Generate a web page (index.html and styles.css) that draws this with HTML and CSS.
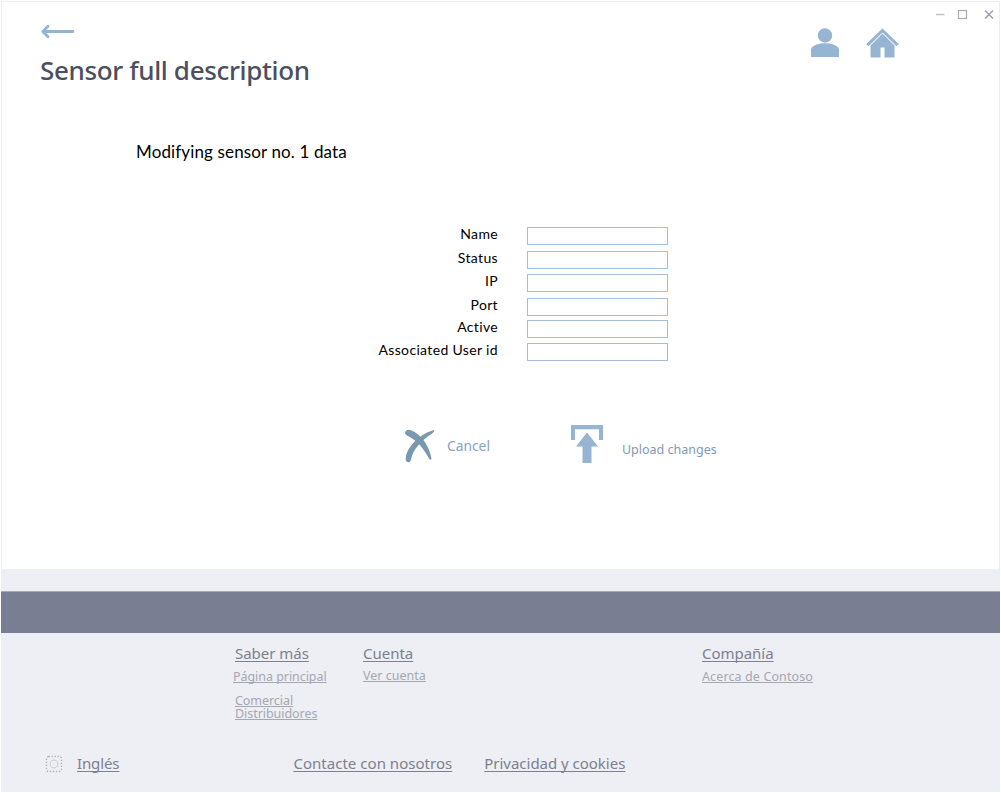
FILE: index.html
```html
<!DOCTYPE html>
<html lang="en">
<head>
<meta charset="utf-8">
<title>Sensor full description</title>
<link rel="stylesheet" href="styles.css">
</head>
<body>
<div class="window">
  <main class="content">
    <div class="titlebar">
      <svg class="window-controls" width="56" height="12" viewBox="0 0 56 12" fill="none">
        <path d="M0 6.500h8.500" stroke="#c3c3ca" stroke-width="1.500"/>
        <rect x="22.500" y="2.500" width="8" height="8" stroke="#aaaab8" stroke-width="1.200"/>
        <path d="M49 2.500l8 8M57 2.500l-8 8" stroke="#9d9ead" stroke-width="1.500"/>
      </svg>
    </div>
    <header class="header">
      <div class="heading">
        <svg class="back" width="34" height="14" viewBox="0 0 34 14" fill="none" stroke="#93b5d3" stroke-width="2.800" stroke-linecap="round" stroke-linejoin="round">
          <path d="M2 7.500H32M7 2.300L1.800 7.500L7 12.700"/>
        </svg>
        <h1 class="title">Sensor full description</h1>
      </div>
      <nav class="nav">
        <svg width="28" height="30" viewBox="0 0 28 30" fill="#95b5d2">
          <circle cx="14" cy="7.500" r="7.200"/>
          <path d="M0 29V21C2 17 8 15.300 14 15.300S26 17 28 21V29Z"/>
        </svg>
        <svg width="34" height="30" viewBox="0 0 34 30" fill="#95b5d2">
          <path d="M16.500 .500L32.800 16L30.500 18.200L16.500 4.500L2.500 18.200L.200 16Z"/>
          <path d="M16.500 5.500L28.500 17.400V29.500H18.500V19.500H14.500V29.500H4.500V17.400Z"/>
        </svg>
      </nav>
    </header>
    <p class="subtitle">Modifying sensor no. 1 data</p>
    <form class="form">
      <label class="label" for="name">Name</label><input class="field" id="name">
      <label class="label" for="status">Status</label><input class="field" id="status">
      <label class="label" for="ip">IP</label><input class="field" id="ip">
      <label class="label" for="port">Port</label><input class="field" id="port">
      <label class="label" for="active">Active</label><input class="field" id="active">
      <label class="label" for="user">Associated User id</label><input class="field" id="user">
    </form>
    <div class="actions">
      <a class="action cancel">
        <svg width="30" height="34" viewBox="0 0 30 34" fill="#7a97b0">
          <path d="M0 4.500C0 1 3 -.200 6 1.200C17 6 25 18 26.500 30Q25.500 31.500 24.200 30C19 20 12 11 1.500 6.300Z"/>
          <path d="M29 1C29.500 2.500 29 3.200 27 4.500C16 12 8 20 6 30.500C5.500 33.500 3.500 34 1 32C-1 22 12 5.500 29 1Z"/>
        </svg>
        <span>Cancel</span>
      </a>
      <a class="action upload">
        <svg width="32" height="38" viewBox="0 0 32 38" fill="#95b5d2">
          <path d="M0 0H32V15H28V4.300H4V15H0Z"/>
          <path d="M16 7.500L27 21.500H20.500V38H11.500V21.500H5Z"/>
        </svg>
        <span>Upload changes</span>
      </a>
    </div>
  </main>
  <footer class="footer">
    <div class="band"></div>
    <div class="links">
      <div class="column">
        <a class="link">Saber más</a>
        <a class="sublink home">Página principal</a>
        <a class="sublink tight">Comercial</a>
        <a class="sublink tight">Distribuidores</a>
      </div>
      <div class="column">
        <a class="link">Cuenta</a>
        <a class="sublink account">Ver cuenta</a>
      </div>
      <div class="column">
        <a class="link">Compañía</a>
        <a class="sublink about">Acerca de Contoso</a>
      </div>
    </div>
    <div class="bottom">
      <svg class="language-icon" width="18" height="18" viewBox="0 0 18 18" fill="none">
        <rect x="1.500" y="1.500" width="15" height="15" rx="2" stroke="#b0b0b8" stroke-width="1.400" stroke-dasharray="1.300 1.700"/>
        <circle cx="9" cy="9" r="3.800" stroke="#d0d0d5" stroke-width="1.200"/>
      </svg>
      <a class="link language">Inglés</a>
      <a class="link contact">Contacte con nosotros</a>
      <a class="link">Privacidad y cookies</a>
    </div>
  </footer>
</div>
</body>
</html>
```

FILE: styles.css
```css
* { box-sizing: border-box; }

body {
  margin: 0;
  background: #fff;
  font-family: "Noto Sans", "Open Sans", sans-serif;
}

.window { height: 793px; padding: 1px 1px 1px 1px; }

.content {
  height: 568px;
  border: 1px solid #eee;
  border-bottom: 0;
}

svg { display: block; overflow: visible; }

.titlebar {
  display: flex;
  justify-content: flex-end;
  height: 23px;
  padding: 6px 7px 0 0;
}

.header {
  display: flex;
  justify-content: space-between;
  height: 65px;
  padding: 0 99px 0 39px;
}

.back { margin-top: -1px; }

.title {
  margin: 14px 0 0 -1px;
  color: #4b4f5f;
  font-size: 26px;
  font-weight: 500;
  line-height: 36px;
  letter-spacing: -0.36px;
  white-space: nowrap;
}

.nav { display: flex; gap: 27px; padding-top: 3px; }

.subtitle {
  margin: 50px 0 0 134px;
  color: #000;
  font: 17px/24px Lato, sans-serif;
  letter-spacing: 0.13px;
}

.form {
  display: grid;
  grid-template-columns: 120px 141px;
  grid-template-rows: 23.5px 23.5px 23.5px 22.5px 22.5px 18px;
  column-gap: 29px;
  margin: 63px 0 0 376px;
}

.label {
  color: #000;
  font: 14px/20px Lato, sans-serif;
  letter-spacing: 0.35px;
  margin-top: -3px;
  text-align: right;
  white-space: nowrap;
}

.field {
  width: 141px;
  height: 18px;
  padding: 0 3px;
  border: 1px solid #a3c0da;
  outline: 0;
  background: #fff;
}

.actions {
  display: flex;
  gap: 81px;
  margin: 64px 0 0 403px;
}

.action { display: flex; white-space: nowrap; }
.cancel { gap: 12px; padding-top: 4px; font-size: 13.8px; line-height: 20px; color: #87a3bb; }
.cancel span { margin-top: 7px; }
.upload { gap: 19px; font-size: 12.5px; line-height: 20px; color: #7f9bb4; }
.upload span { margin-top: 15px; }

.footer {
  height: 223px;
  padding-top: 22px;
  background: #eeeff4;
}

.band {
  height: 42px;
  border-top: 1px solid #a6a9b7;
  background: #7a7e92;
}

.links {
  display: grid;
  grid-template-columns: 128px 339px auto;
  height: 119px;
  padding: 9px 0 0 234px;
}

.column { display: flex; flex-direction: column; align-items: flex-start; }

.link {
  color: #7d8090;
  font-size: 15px;
  line-height: 22px;
  letter-spacing: -0.02px;
  text-decoration: underline;
  text-decoration-thickness: 1px;
  text-underline-offset: 2px;
  text-decoration-skip-ink: none;
  white-space: nowrap;
}

.sublink {
  color: #a5a7b1;
  font-size: 12.5px;
  line-height: 22px;
  letter-spacing: -0.05px;
  text-decoration: underline;
  text-decoration-thickness: 1px;
  text-underline-offset: 1px;
  text-decoration-skip-ink: none;
  white-space: nowrap;
}

.home { margin: 2px 0 6px -2px; }
.account { margin-top: 1px; letter-spacing: 0; }
.about { margin-top: 2px; letter-spacing: 0.12px; }
.tight { line-height: 13px; }

.bottom {
  display: flex;
  align-items: flex-start;
  padding-left: 44px;
}

.language-icon { margin: 3px 14px 0 0; }
.language { letter-spacing: -0.12px; }
.contact { margin: 0 32px 0 174px; letter-spacing: 0.03px; }
```
